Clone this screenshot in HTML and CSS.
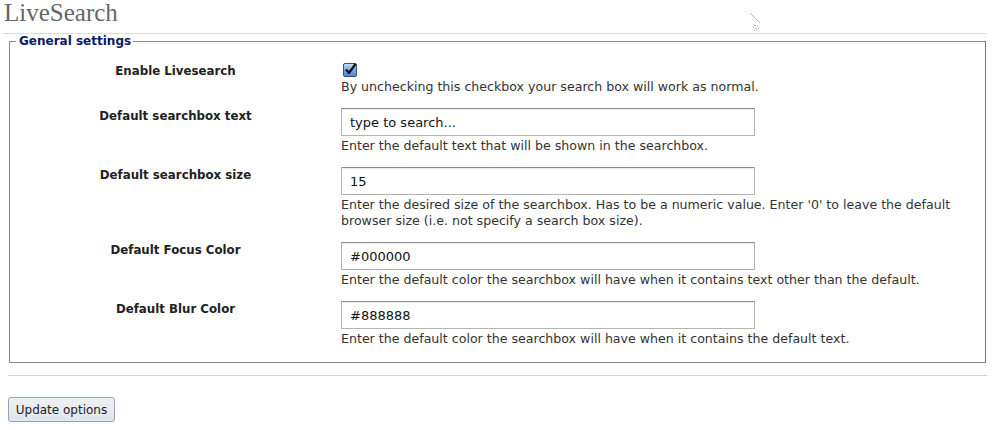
FILE: index.html
```html
<!DOCTYPE html>
<html>
<head>
<meta charset="utf-8">
<title>LiveSearch</title>
<link rel="stylesheet" href="styles.css">
</head>
<body>
<div class="wrap">
  <h1 class="title">LiveSearch</h1>
  <svg class="artifact" width="14" height="20" viewBox="0 0 14 20">
    <g fill="#b9b9c9">
      <rect x="1" y="0" width="1" height="1"/><rect x="2" y="1" width="1" height="1"/><rect x="3" y="2" width="1" height="1"/><rect x="4" y="3" width="1" height="1"/><rect x="5" y="4" width="1" height="1"/><rect x="6" y="5" width="1" height="1"/><rect x="7" y="6" width="1" height="1"/><rect x="8" y="7" width="1" height="1"/><rect x="9" y="8" width="1" height="1"/><rect x="10" y="9" width="1" height="1"/>
      <rect x="5" y="12" width="2" height="1"/><rect x="8" y="13" width="1" height="1"/><rect x="4" y="14" width="1" height="1"/><rect x="6" y="15" width="2" height="1"/><rect x="9" y="15" width="1" height="1"/><rect x="5" y="17" width="1" height="1"/><rect x="7" y="17" width="1" height="1"/>
    </g>
  </svg>
  <hr class="rule">
  <form class="options">
    <fieldset class="group">
      <legend class="legend">General settings</legend>
      <div class="row">
        <div class="label">Enable Livesearch</div>
        <div class="field">
          <span class="check">
            <svg width="14" height="14" viewBox="0 0 14 14">
              <defs>
                <linearGradient id="cb" x1="0" y1="0" x2="0" y2="1">
                  <stop offset="0" stop-color="#c9ddf6"/>
                  <stop offset="0.5" stop-color="#7aa7e3"/>
                  <stop offset="1" stop-color="#4c86d6"/>
                </linearGradient>
              </defs>
              <rect x="0.5" y="0.5" width="13" height="13" rx="1.5" fill="url(#cb)" stroke="#2f4f86"/>
              <path d="M3 6.5 L6 10 L12.5 1" fill="none" stroke="#111" stroke-width="2.2" stroke-linejoin="round"/>
            </svg>
          </span>
          <div class="desc">By unchecking this checkbox your search box will work as normal.</div>
        </div>
      </div>
      <div class="row">
        <div class="label">Default searchbox text</div>
        <div class="field">
          <input class="text" type="text" value="type to search...">
          <div class="desc">Enter the default text that will be shown in the searchbox.</div>
        </div>
      </div>
      <div class="row">
        <div class="label">Default searchbox size</div>
        <div class="field">
          <input class="text" type="text" value="15">
          <div class="desc">Enter the desired size of the searchbox. Has to be a numeric value. Enter '0' to leave the default browser size (i.e. not specify a search box size).</div>
        </div>
      </div>
      <div class="row">
        <div class="label">Default Focus Color</div>
        <div class="field">
          <input class="text" type="text" value="#000000">
          <div class="desc">Enter the default color the searchbox will have when it contains text other than the default.</div>
        </div>
      </div>
      <div class="row">
        <div class="label">Default Blur Color</div>
        <div class="field">
          <input class="text" type="text" value="#888888">
          <div class="desc">Enter the default color the searchbox will have when it contains the default text.</div>
        </div>
      </div>
    </fieldset>
    <hr class="rule rule-bottom">
    <button class="submit" type="button">Update options</button>
  </form>
</div>
</body>
</html>
```
FILE: styles.css
```css
html, body {
  margin: 0;
  padding: 0;
  background: #ffffff;
}
body {
  font-family: "DejaVu Sans", Verdana, sans-serif;
  font-size: 12.6px;
  color: #333333;
}
.wrap {
  position: relative;
  padding: 0 7px 0 3px;
}
.title {
  margin: 0;
  padding: 0 0 0 1px;
  font-family: "Liberation Serif", "DejaVu Serif", serif;
  font-weight: normal;
  font-size: 25px;
  line-height: 26px;
  color: #666666;
  height: 33px;
}
.artifact {
  position: absolute;
  left: 749px;
  top: 13px;
}
.rule {
  border: 0;
  border-top: 1px solid #dddddd;
  margin: 0;
  height: 0;
}
.options {
  margin: 0;
}
.group {
  margin: 0 1px 0 6px;
  padding: 15px 0 15px 0;
  border: 1px solid #8c8c8c;
  border-right-color: #777;
  min-width: 0;
}
.legend {
  margin-left: 6px;
  padding: 0 2px 0 3px;
  font-weight: bold;
  font-size: 12px;
  line-height: 14px;
  color: #0b1a66;
}
.row {
  display: grid;
  grid-template-columns: 331px 630px;
  margin-bottom: 13px;
}
.row:last-child {
  margin-bottom: 0;
}
.label {
  text-align: center;
  font-weight: bold;
  font-size: 11.8px;
  line-height: 16px;
  color: #222222;
}
.field {
  display: flex;
  flex-direction: column;
  align-items: flex-start;
}
.check {
  display: block;
  width: 14px;
  height: 14px;
  margin: 0 0 2px 2px;
}
.check svg {
  display: block;
}
.text {
  box-sizing: border-box;
  width: 414px;
  height: 28px;
  margin: 0 0 2px 0;
  padding: 0 8px;
  border: 1px solid #b3b3b3;
  border-top-color: #8e8e8e;
  font-family: "DejaVu Sans", Verdana, sans-serif;
  font-size: 13px;
  color: #111111;
  background: #ffffff;
  box-shadow: inset 0 1px 1px rgba(0,0,0,0.08);
}
.desc {
  line-height: 16px;
  font-size: 12.6px;
  color: #333333;
}
.rule-bottom {
  margin: 12px 0 0 5px;
  border-top-color: #d4d4d4;
}
.submit {
  display: block;
  margin: 21px 0 0 5px;
  box-sizing: border-box;
  width: 107px;
  height: 25px;
  padding: 0;
  border: 1px solid #94a6bb;
  border-radius: 3px;
  background: linear-gradient(#eef0f3, #e1e5ea);
  font-family: "DejaVu Sans", Verdana, sans-serif;
  font-size: 12px;
  color: #222222;
}
```
